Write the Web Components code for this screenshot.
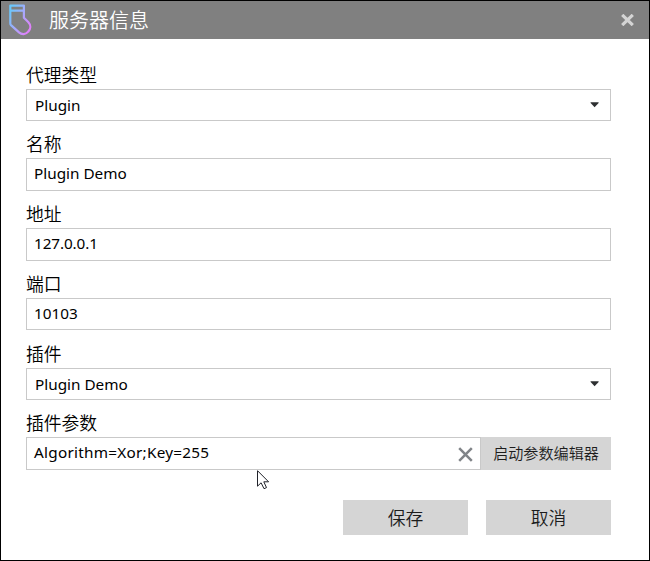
<!DOCTYPE html>
<html lang="zh-CN">
<head>
<meta charset="utf-8">
<title>服务器信息</title>
<style>
html,body{margin:0;height:100%;background:#fff;overflow:hidden}
body{font-family:"Noto Sans","Noto Sans CJK SC",sans-serif;color:#000}
</style>
</head>
<body>
<server-dialog></server-dialog>
<script>
const define = (name, html) => {
  const tpl = document.createElement('template');
  tpl.innerHTML = html;
  customElements.define(name, class extends HTMLElement {
    constructor() {
      super();
      this.attachShadow({ mode: 'open' }).append(tpl.content.cloneNode(true));
    }
  });
};

define('sock-logo', `
<style>:host{display:block;width:24px;height:34px}svg{display:block}</style>
<svg width="24" height="34" viewBox="0 0 24 34" fill="none" stroke="url(#g)" stroke-width="2.2" stroke-linejoin="round">
<defs><linearGradient id="g" gradientUnits="userSpaceOnUse" x1="1" y1="10" x2="23" y2="22"><stop offset="0" stop-color="#6bc7fb"/><stop offset=".5" stop-color="#a6a9fc"/><stop offset="1" stop-color="#df81fb"/></linearGradient></defs>
<path d="M2.3 2.6H15.9V14.8L20.2 19C23.2 22.2 22.8 26 20.2 28.6C17.6 31.6 14 32 11 29.4L3 22.1Q2.3 21.4 2.3 20.2ZM2.3 7.6H15.9"/>
</svg>`);

define('title-bar', `
<style>
:host{display:flex;align-items:center;height:38px;padding:0 15px 0 7px;background:#808080;color:#fff;box-sizing:border-box}
.t{flex:1;font:350 20px/38px "Noto Sans CJK SC",sans-serif;padding-left:17px}
svg{display:block}
</style>
<sock-logo></sock-logo><span class="t"><slot></slot></span>
<svg width="13" height="12" viewBox="0 0 13 12" stroke="#d4d4d4" stroke-width="3.2"><path d="M1.2 .9L11.8 11.1M11.8 .9L1.2 11.1"/></svg>`);

define('form-field', `
<style>
:host{display:flex;flex-direction:column;justify-content:flex-end}
.l{font:350 17.8px/25px "Noto Sans CJK SC",sans-serif;height:27px;flex:none}
.r{display:flex}
</style>
<div class="l"><slot name="label"></slot></div><div class="r"><slot></slot></div>`);

define('text-box', `
<style>
:host{display:flex;flex:1;box-sizing:border-box;height:33px;border:1px solid #c9c9c9;background:#fff;font-size:15.3px;line-height:29px;padding-left:7px}
span{flex:1}
</style><span><slot></slot></span><slot name="icon"></slot>`);

define('combo-box', `
<style>
:host{display:flex;flex:1;box-sizing:border-box;height:32px;border:1px solid #c9c9c9;background:#fff;font-size:15.3px;line-height:31px;padding:0 11px 0 8px}
span{flex:1}svg{display:block;margin-top:12px}
</style><span><slot></slot></span>
<svg width="9" height="6" viewBox="0 0 9 6"><path d="M.6 .2H8.6V1L4.6 5.2L.6 1Z" fill="#2d2f31"/></svg>`);

define('clear-icon', `
<style>:host{display:block;padding:9px 7px 0 0}svg{display:block}</style>
<svg width="15" height="15" viewBox="0 0 15 15" stroke="#808488" stroke-width="2.5"><path d="M1.2 1.2L13.8 13.8M13.8 1.2L1.2 13.8"/></svg>`);

define('push-button', `
<style>
:host{display:block;width:125px;height:35px;background:#d5d5d5;color:#1c1c1c;text-align:center;font:350 17.8px/35px "Noto Sans CJK SC",sans-serif}
:host([compact]){width:130px;height:33px;font-size:15.1px;line-height:31px}
</style><slot></slot>`);

define('mouse-pointer', `
<style>:host{position:absolute;left:257px;top:470px}svg{display:block}</style>
<svg width="13" height="20" viewBox="0 0 13 20"><path d="M.5 .7V16.2L4.1 12.8L7 18.7L9.5 17.6L6.8 11.8H11.6Z" fill="#fff" stroke="#20222a"/></svg>`);

define('server-dialog', `
<style>
:host{display:block;box-sizing:border-box;width:650px;height:561px;border:1px solid #000;background:#fff}
.form{display:grid;grid-template-rows:59px 70px 70px 69px 70px 70px;margin:23px 38px 0 25px}
.actions{display:flex;justify-content:flex-end;gap:18px;margin:30px 38px 0 0}
</style>
<title-bar>服务器信息</title-bar>
<div class="form">
<form-field><span slot="label">代理类型</span><combo-box>Plugin</combo-box></form-field>
<form-field><span slot="label">名称</span><text-box>Plugin Demo</text-box></form-field>
<form-field><span slot="label">地址</span><text-box style="letter-spacing:-.1px">127.0.0.1</text-box></form-field>
<form-field><span slot="label">端口</span><text-box style="height:32px">10103</text-box></form-field>
<form-field><span slot="label">插件</span><combo-box>Plugin Demo</combo-box></form-field>
<form-field><span slot="label">插件参数</span><text-box style="letter-spacing:.26px">Algorithm=Xor;Key=255<clear-icon slot="icon"></clear-icon></text-box><push-button compact>启动参数编辑器</push-button></form-field>
</div>
<div class="actions"><push-button>保存</push-button><push-button>取消</push-button></div>
<mouse-pointer></mouse-pointer>`);
</script>
</body>
</html>
